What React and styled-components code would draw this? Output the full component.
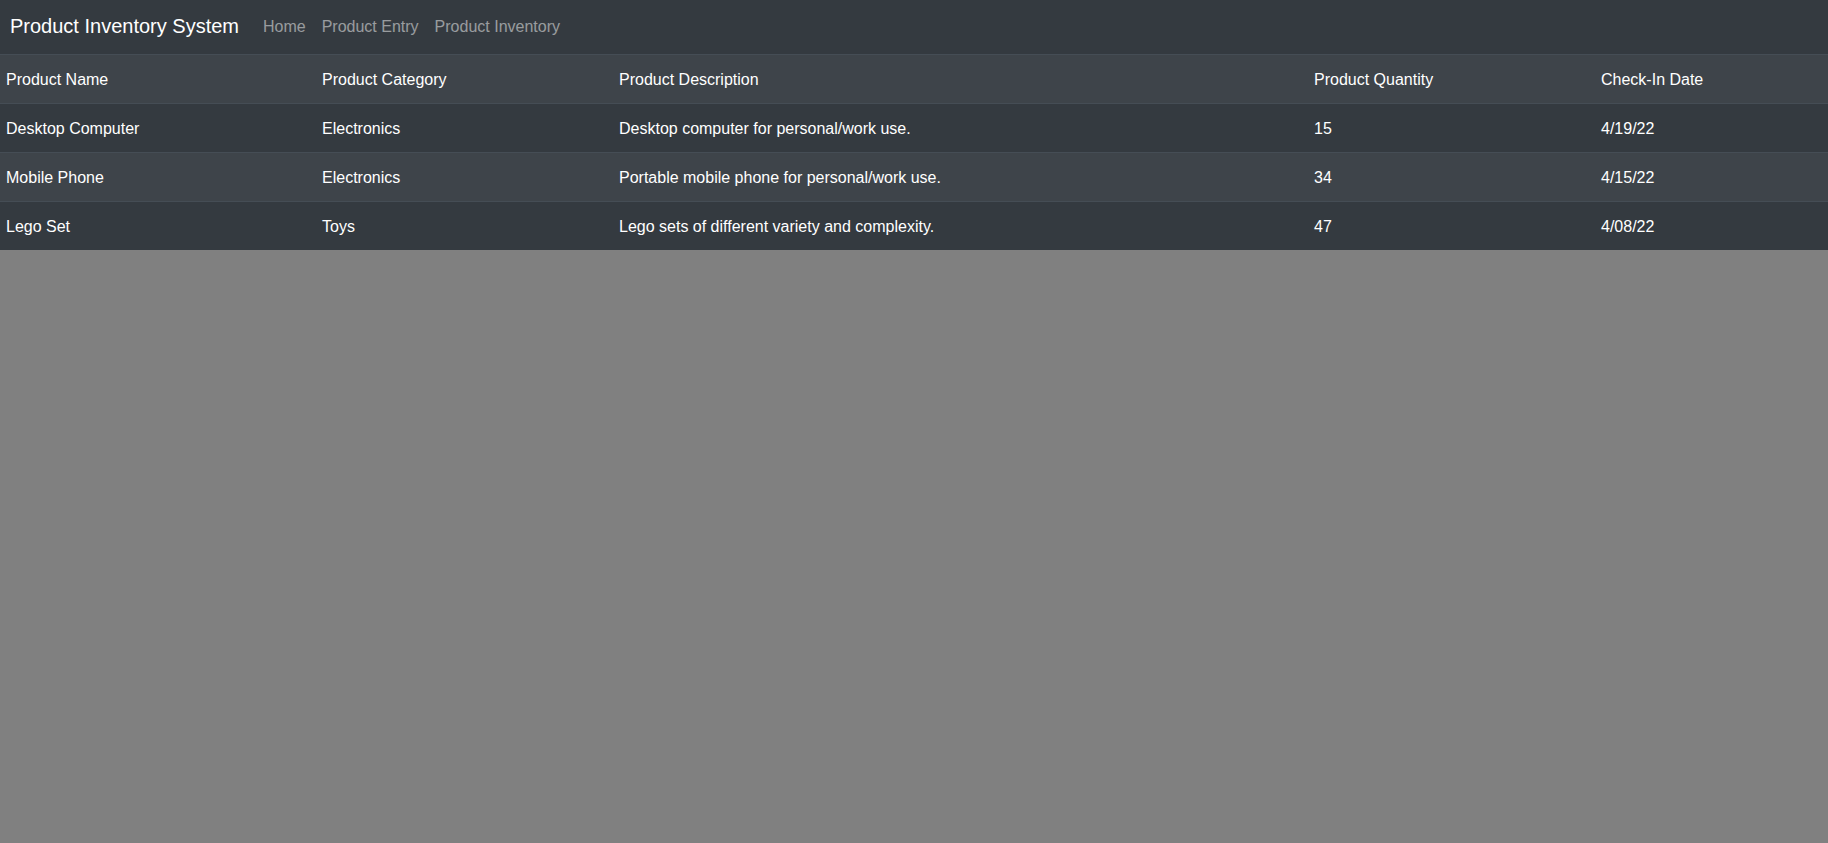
import React from "react";
import styled, { createGlobalStyle } from "styled-components";

const products = [
  {
    name: "Desktop Computer",
    category: "Electronics",
    description: "Desktop computer for personal/work use.",
    quantity: 15,
    date: "4/19/22",
  },
  {
    name: "Mobile Phone",
    category: "Electronics",
    description: "Portable mobile phone for personal/work use.",
    quantity: 34,
    date: "4/15/22",
  },
  {
    name: "Lego Set",
    category: "Toys",
    description: "Lego sets of different variety and complexity.",
    quantity: 47,
    date: "4/08/22",
  },
];

const columns = [
  { label: "Product Name", width: 316 },
  { label: "Product Category", width: 297 },
  { label: "Product Description", width: 695 },
  { label: "Product Quantity", width: 287 },
  { label: "Check-In Date", width: 233 },
];

const GlobalStyle = createGlobalStyle`
  html, body {
    margin: 0;
    padding: 0;
    background-color: #808080;
    font-family: "Liberation Sans", Arial, Helvetica, sans-serif;
    font-size: 16px;
    line-height: 1.5;
    color: #fff;
  }
  * {
    box-sizing: border-box;
  }
`;

const App = () => {
  return (
    <>
      <GlobalStyle />
      <StNavbar>
        <StBrand href="#">Product Inventory System</StBrand>
        <StNav>
          <StNavLink href="#">Home</StNavLink>
          <StNavLink href="#">Product Entry</StNavLink>
          <StNavLink href="#">Product Inventory</StNavLink>
        </StNav>
      </StNavbar>
      <StTable>
        <colgroup>
          {columns.map((col) => (
            <col key={col.label} style={{ width: col.width }} />
          ))}
        </colgroup>
        <tbody>
          <StRow $striped>
            {columns.map((col) => (
              <StCell as="th" key={col.label}>
                {col.label}
              </StCell>
            ))}
          </StRow>
          {products.map((p, i) => (
            <StRow key={p.name} $striped={i % 2 === 1}>
              <StCell>{p.name}</StCell>
              <StCell>{p.category}</StCell>
              <StCell>{p.description}</StCell>
              <StCell>{p.quantity}</StCell>
              <StCell>{p.date}</StCell>
            </StRow>
          ))}
        </tbody>
      </StTable>
    </>
  );
};

export default App;

const StNavbar = styled.nav`
  display: flex;
  align-items: center;
  padding: 7px 10px;
  background-color: #343a40;
`;
const StBrand = styled.a`
  padding: 4px 0 6px;
  margin-right: 16px;
  font-size: 20px;
  line-height: 30px;
  color: #fff;
  text-decoration: none;
  white-space: nowrap;
`;
const StNav = styled.div`
  display: flex;
  flex-direction: row;
`;
const StNavLink = styled.a`
  padding: 8px;
  color: rgba(255, 255, 255, 0.5);
  text-decoration: none;
  line-height: 24px;
`;
const StTable = styled.table`
  width: 100%;
  border-collapse: collapse;
  table-layout: fixed;
  background-color: #343a40;
  color: #fff;
`;
const StRow = styled.tr`
  background-color: ${(props) => (props.$striped ? "#3e444a" : "#343a40")};
`;
const StCell = styled.td`
  padding: 13px 6px 11px;
  border-top: 1px solid #454d55;
  text-align: left;
  font-weight: 400;
  line-height: 24px;
  vertical-align: top;
`;
